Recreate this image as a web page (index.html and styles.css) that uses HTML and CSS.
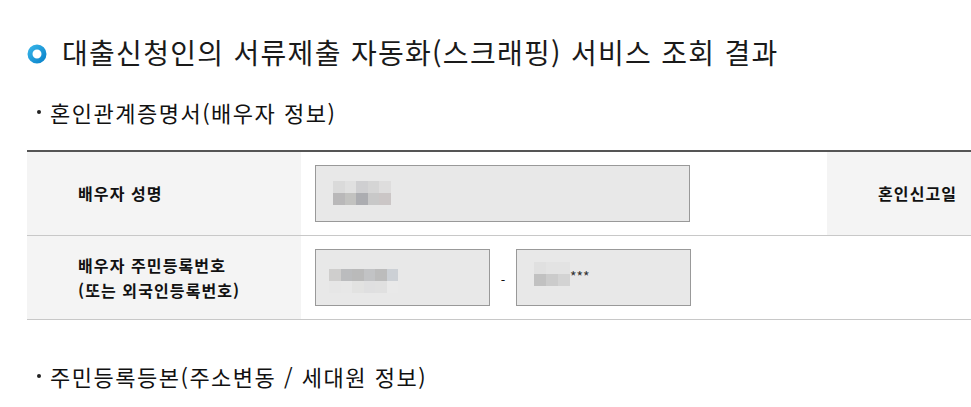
FILE: index.html
```html
<!DOCTYPE html>
<html lang="ko">
<head>
<meta charset="utf-8">
<title>서류제출 자동화 조회 결과</title>
<link rel="stylesheet" href="styles.css">
</head>
<body>
<div class="page">
  <h2 class="title">
    <svg class="ring" width="20" height="20" viewBox="0 0 20 20" aria-hidden="true">
      <defs>
        <linearGradient id="rg" x1="0" y1="0" x2="1" y2="1">
          <stop offset="0" stop-color="#34b1e6"/>
          <stop offset="1" stop-color="#0d86cc"/>
        </linearGradient>
      </defs>
      <circle cx="10" cy="10" r="7" fill="none" stroke="url(#rg)" stroke-width="5"/>
    </svg>
    <span>대출신청인의 서류제출 자동화(스크래핑) 서비스 조회 결과</span>
  </h2>

  <h3 class="sub"><span class="dot"></span>혼인관계증명서(배우자 정보)</h3>

  <div class="tbl-wrap">
    <table class="tbl">
      <colgroup>
        <col class="c1"><col class="c2"><col class="c3"><col class="c4">
      </colgroup>
      <tr>
        <th>배우자 성명</th>
        <td>
          <div class="box wide">
            <div class="mosaic">
              <div class="mrow">
                <i style="background:#dadada"></i><i style="background:#e0e0e0"></i><i style="background:#cfcfd1"></i><i style="background:#d5d5d5"></i><i style="background:#dedddd"></i>
              </div>
              <div class="mrow">
                <i style="background:#b9b8b9"></i><i style="background:#c2c2c0"></i><i style="background:#acadb1"></i><i style="background:#c8c8c8"></i><i style="background:#cbc6c6"></i>
              </div>
            </div>
          </div>
        </td>
        <th>혼인신고일</th>
        <td></td>
      </tr>
      <tr>
        <th>배우자 주민등록번호<br>(또는 외국인등록번호)</th>
        <td colspan="3">
          <div class="idrow">
            <div class="box half">
              <div class="mosaic m2">
                <div class="mrow">
                  <i style="background:#cfcecd"></i><i style="background:#bbbcbe"></i><i style="background:#bababa"></i><i style="background:#c2c3c5"></i><i style="background:#bcbcbc"></i><i style="background:#ccd0d5"></i>
                </div>
                <div class="mrow">
                  <i style="background:#e6e6e6"></i><i style="background:#e7e7e7"></i><i style="background:#e2e2e1"></i><i style="background:#dfdfe0"></i><i style="background:#e0e0e0"></i><i style="background:#e9e9e9"></i>
                </div>
              </div>
            </div>
            <span class="dash">-</span>
            <div class="box half">
              <div class="mosaic m3">
                <div class="mrow">
                  <i style="background:#e0e0e0"></i><i style="background:#e3e3e3"></i><i style="background:#e3e3e3"></i>
                </div>
                <div class="mrow">
                  <i style="background:#c1c1c1"></i><i style="background:#cbcbcb"></i><i style="background:#d3d3d3"></i>
                </div>
              </div>
              <span class="stars">***</span>
            </div>
          </div>
        </td>
      </tr>
    </table>
  </div>

  <h3 class="sub sub2"><span class="dot"></span>주민등록등본(주소변동 / 세대원 정보)</h3>
</div>
</body>
</html>
```

FILE: styles.css
```css
html, body {
  margin: 0;
  padding: 0;
  background: #fff;
  overflow: hidden;
}
body {
  font-family: "Noto Sans CJK KR", "Noto Sans", sans-serif;
  color: #111;
}
.page {
  padding: 34px 0 0 27px;
}
.title {
  display: flex;
  align-items: center;
  margin: 0;
  height: 36px;
  font-size: 28px;
  font-weight: 400;
  line-height: 36px;
  letter-spacing: 1.3px;
  color: #1a1a1a;
}
.ring {
  flex: none;
  margin-right: 15px;
  margin-top: 4px;
}
.sub {
  display: flex;
  align-items: center;
  margin: 27px 0 0 0;
  height: 30px;
  font-size: 22px;
  font-weight: 400;
  line-height: 30px;
  letter-spacing: 1.5px;
  color: #111;
}
.sub2 {
  margin-top: 41px;
}
.dot {
  width: 4px;
  height: 4px;
  border-radius: 50%;
  background: #222;
  margin: 0 9px 0 10px;
  flex: none;
}
.tbl-wrap {
  margin-top: 23px;
  overflow: hidden;
}
.tbl {
  border-collapse: collapse;
  table-layout: fixed;
  width: 1100px;
  border-top: 2px solid #555;
}
.c1 { width: 274px; }
.c2 { width: 526px; }
.c3 { width: 182px; }
.c4 { width: 118px; }
.tbl tr {
  border-bottom: 1px solid #c8c8c8;
}
.tbl th {
  background: #f4f4f4;
  text-align: left;
  font-size: 16px;
  font-weight: 700;
  line-height: 25px;
  letter-spacing: 1.1px;
  padding: 0 0 0 51px;
  height: 83px;
  color: #111;
}
.tbl td {
  padding: 0 0 0 14px;
  height: 83px;
  vertical-align: middle;
}
.box {
  box-sizing: border-box;
  height: 57px;
  background: #e8e8e8;
  border: 1px solid #999;
  display: flex;
  align-items: center;
}
.wide { width: 375px; }
.half { width: 175px; }
.idrow {
  display: flex;
  align-items: center;
}
.dash {
  width: 26px;
  text-align: center;
  font-size: 13px;
  line-height: 13px;
  margin-top: 3px;
}
.mosaic {
  display: flex;
  flex-direction: column;
  margin-left: 17px;
  margin-top: -2px;
}
.mrow {
  display: flex;
}
.mrow i {
  display: block;
  width: 11.5px;
  height: 12px;
}
.m2 {
  margin-left: 13px;
  margin-top: 7px;
}
.m3 {
  margin-left: 17px;
  margin-top: -8px;
}
.m3 .mrow i { width: 12px; }
.stars {
  font-size: 14px;
  line-height: 14px;
  color: #333;
  margin-top: -3px;
}
```
